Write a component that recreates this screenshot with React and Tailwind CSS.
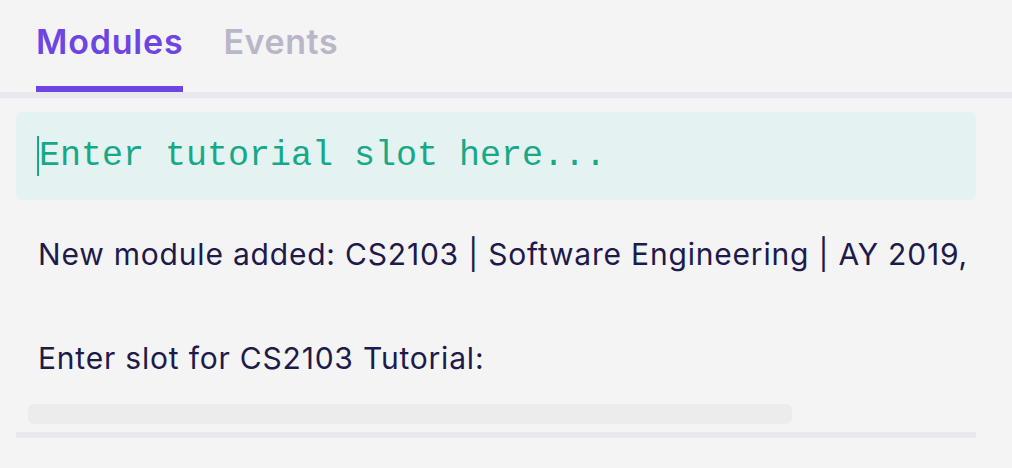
import React, { useState } from "react";

export default function App() {
  const [tab, setTab] = useState("modules");
  const [slot, setSlot] = useState("");

  return (
    <div className="w-[1012px] h-[468px] bg-[#f4f4f4] overflow-hidden" style={{ fontFamily: "Inter, 'Noto Sans', sans-serif" }}>
      <div className="flex gap-[40px] pl-[36px] border-b-[6px] border-[#e9e8ee] h-[98px]">
        <button
          onClick={() => setTab("modules")}
          className={"flex flex-col justify-between pt-[20px] " + (tab === "modules" ? "text-[#6c45e3]" : "text-[#b9b6c8]")}
        >
          <span className="text-[34px] font-semibold leading-[44px] tracking-[0.8px]">Modules</span>
          <span className={"h-[6px] w-full " + (tab === "modules" ? "bg-[#6c45e3]" : "bg-transparent")} />
        </button>
        <button
          onClick={() => setTab("events")}
          className={"flex flex-col justify-between pt-[20px] " + (tab === "events" ? "text-[#6c45e3]" : "text-[#b9b6c8]")}
        >
          <span className="text-[34px] font-semibold leading-[44px] tracking-[0.6px]">Events</span>
          <span className={"h-[6px] w-full " + (tab === "events" ? "bg-[#6c45e3]" : "bg-transparent")} />
        </button>
      </div>

      <div className="px-[16px] pt-[14px] w-[992px]">
        <div className="h-[88px] bg-[#e4f2f1] rounded-[6px] flex items-center pl-[21px]">
          {/* caret shown while the field is empty */}
          {!slot && <span className="w-[2px] h-[40px] bg-[#16a987] shrink-0" />}
          <input
            value={slot}
            onChange={(e) => setSlot(e.target.value)}
            placeholder="Enter tutorial slot here..."
            className="w-full bg-transparent outline-none text-[35px] text-[#16a987] placeholder:text-[#16a987] caret-[#16a987]"
            style={{ fontFamily: "'Liberation Mono', 'Courier New', monospace" }}
          />
        </div>

        <div className="overflow-hidden w-[960px] pl-[22px] text-[#201a4b] text-[30px] leading-[40px] tracking-[0.8px]">
          <p className="whitespace-nowrap mt-[34px]">New module added: CS2103 | Software Engineering | AY 2019,</p>
          <p className="whitespace-nowrap mt-[64px]">Enter slot for CS2103 Tutorial:</p>
        </div>

        <div className="ml-[12px] mt-[26px] w-[764px] h-[20px] rounded-[6px] bg-[#ececec]" />
        <div className="mt-[8px] h-[6px] w-[960px] bg-[#e9e8ee]" />
      </div>
    </div>
  );
}
